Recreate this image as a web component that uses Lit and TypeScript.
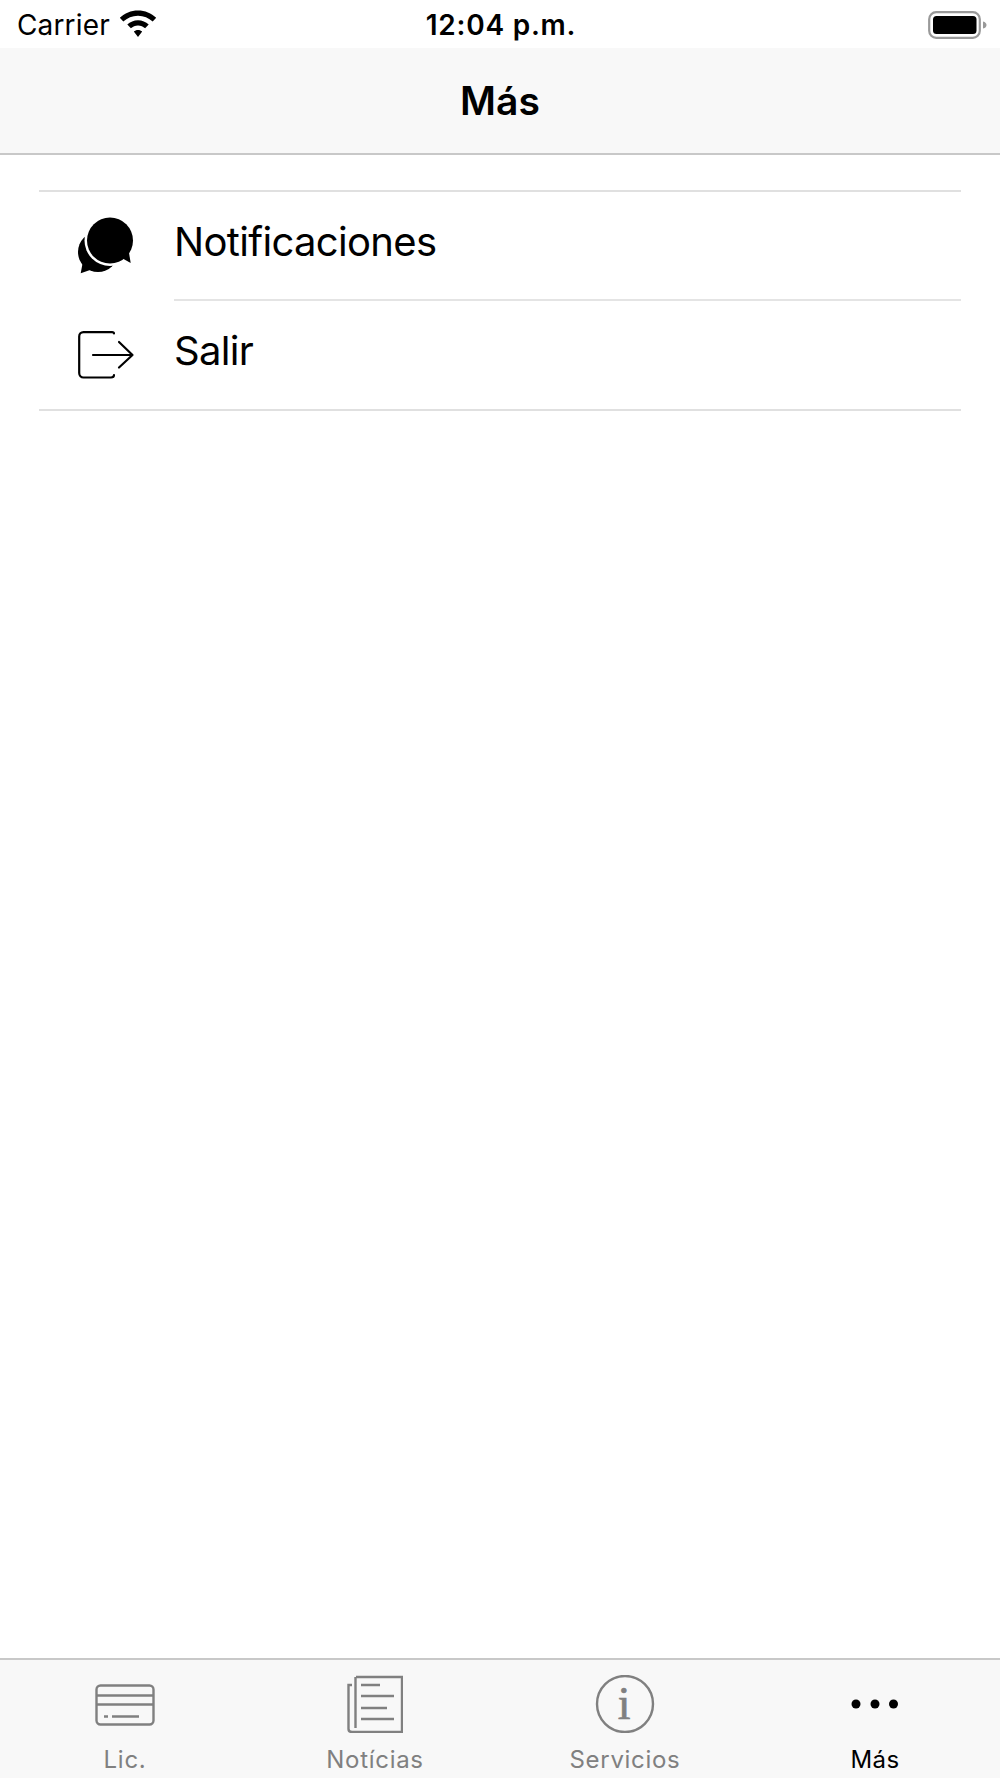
import { LitElement, html, css } from "lit";
import { customElement } from "lit/decorators.js";

@customElement("app-root")
export class AppRoot extends LitElement {
  static styles = css`
    :host { display: block; width: 1000px; height: 1778px; background: #fff; font-family: Inter, "Liberation Sans", sans-serif; color: #000; overflow: hidden; }
    .page { display: flex; flex-direction: column; height: 1778px; }
    .status { height: 48px; display: grid; grid-template-columns: 1fr auto 1fr; align-items: center; padding: 2px 12px 0 17px; box-sizing: border-box; flex: none; }
    .status-left { display: flex; align-items: center; gap: 9px; font-size: 28px; font-weight: 400; letter-spacing: 0.15px; }
    .status-left svg { margin-top: -3px; }
    .time { font-size: 28px; font-weight: 600; letter-spacing: 0.75px; margin-left: -3px; }
    .status-right { display: flex; justify-content: flex-end; margin-top: -1px; }
    .nav { height: 107px; flex: none; box-sizing: border-box; background: #f8f8f8; border-bottom: 2px solid #c8c8c8; display: flex; align-items: center; justify-content: center; font-size: 39px; font-weight: 600; }
    .list { margin: 35px 39px 0; border-top: 2px solid #e0e0e0; border-bottom: 2px solid #e0e0e0; flex: none; }
    .row { height: 108px; display: flex; align-items: center; font-size: 40px; letter-spacing: -0.66px; position: relative; box-sizing: border-box; }
    .row + .row { height: 109px; }
    .row + .row::before { content: ""; position: absolute; top: -1px; left: 135px; right: 0; height: 2px; background: #e4e4e4; }
    .label { margin-bottom: 10px; margin-left: -1px; }
    .row + .row .label { margin-bottom: 8px; }
    .icon { width: 136px; flex: none; display: flex; padding-left: 39px; box-sizing: border-box; }
    .spacer { flex: 1; }
    .tabs { height: 120px; flex: none; box-sizing: border-box; background: #f8f8f8; border-top: 2px solid #c8c8c8; display: grid; grid-template-columns: repeat(4, 1fr); }
    .tab { display: flex; flex-direction: column; align-items: center; color: #808080; font-size: 24px; letter-spacing: 0.7px; }
    .tab.on { color: #000; letter-spacing: 0.4px; }
    .tab svg { display: block; flex: none; margin-top: 15px; }
    .tab span { margin-top: 12px; line-height: 30px; }
    .i { font: 46px "Liberation Serif", serif; fill: #808080; stroke: #808080; stroke-width: 0.7px; }
  `;

  render() {
    return html`<div class="page">
      <div class="status">
        <div class="status-left">Carrier
          <svg width="38" height="28" viewBox="0 0 38 28"><path d="M19 0.5C12 0.5 5.6 3.2 0.8 7.8L4.3 11.6C8.2 8 13.3 5.7 19 5.7S29.8 8 33.7 11.6L37.2 7.8C32.4 3.2 26 0.5 19 0.5ZM19 10.3C14.9 10.3 11.1 11.9 8.3 14.6L11.9 18.3C13.8 16.6 16.2 15.5 19 15.5S24.2 16.6 26.1 18.3L29.7 14.6C26.9 11.9 23.1 10.3 19 10.3ZM19 20C17.4 20 15.9 20.6 14.8 21.6L19 27L23.2 21.6C22.1 20.6 20.6 20 19 20Z"/></svg>
        </div>
        <div class="time">12:04 p.m.</div>
        <div class="status-right">
          <svg width="60" height="30" viewBox="0 0 60 30"><rect x="1.2" y="2.2" width="50.6" height="25.6" rx="7" fill="none" stroke="#999" stroke-width="2.2"/><rect x="5" y="6" width="43.5" height="18" rx="3.5"/><path d="M55 11.5C57.5 12 58.5 13.5 58.5 15S57.500 18 55 18.5Z" fill="#999"/></svg>
        </div>
      </div>
      <div class="nav">Más</div>
      <div class="list">
        <div class="row">
          <div class="icon">
            <svg width="58" height="58" viewBox="0 0 58 58">
              <circle cx="20" cy="35" r="20"/><path d="M5 44L2.700 56.300L15 52Z"/>
              <circle cx="32" cy="23.500" r="25.500" fill="#fff"/>
              <circle cx="32" cy="23.500" r="23"/><path d="M42 40L52.700 46L50 30Z"/>
            </svg>
          </div><span class="label">Notificaciones</span>
        </div>
        <div class="row">
          <div class="icon">
            <svg width="58" height="48" viewBox="0 0 58 48" fill="none" stroke="#000" stroke-width="2.2" stroke-linecap="round" stroke-linejoin="round"><path d="M36 2.500C36 1.500 35 1.100 34 1.100H5.500C3 1.100 1.200 3 1.200 5.500V42C1.200 44.500 3 46.500 5.500 46.500H33C35 46.500 36 45.500 36 44"/><path d="M15 24H54.500M41 11L54.500 24L41 36.500"/></svg>
          </div><span class="label">Salir</span>
        </div>
      </div>
      <div class="spacer"></div>
      <div class="tabs">
        <div class="tab">
          <svg width="60" height="58" viewBox="0 0 60 58" fill="none" stroke="#808080" stroke-width="2.400"><rect x="1.500" y="10.500" width="57" height="39" rx="4"/><path d="M1.500 20.500H58.500M1.500 29.500H58.500M9 41.500H13M17 41.500H44"/></svg>
          <span>Lic.</span>
        </div>
        <div class="tab">
          <svg width="56" height="58" viewBox="0 0 56 58" fill="none" stroke="#808080" stroke-width="2.400"><path d="M9 2H55V57H5C3 57 1.500 56 1.500 54V10H5"/><path d="M8.500 2V53M14 10H33M14 21H47M14 33H40M14 44H47"/></svg>
          <span>Notícias</span>
        </div>
        <div class="tab">
          <svg width="60" height="58" viewBox="0 0 60 58"><circle cx="30" cy="29" r="28" fill="none" stroke="#808080" stroke-width="2.400"/><text class="i" x="29.500" y="44" text-anchor="middle">i</text></svg>
          <span>Servicios</span>
        </div>
        <div class="tab on">
          <svg width="60" height="58" viewBox="0 0 60 58"><circle cx="11" cy="29" r="4.500"/><circle cx="30" cy="29" r="4.500"/><circle cx="48.500" cy="29" r="4.500"/></svg>
          <span>Más</span>
        </div>
      </div>
    </div>`;
  }
}
